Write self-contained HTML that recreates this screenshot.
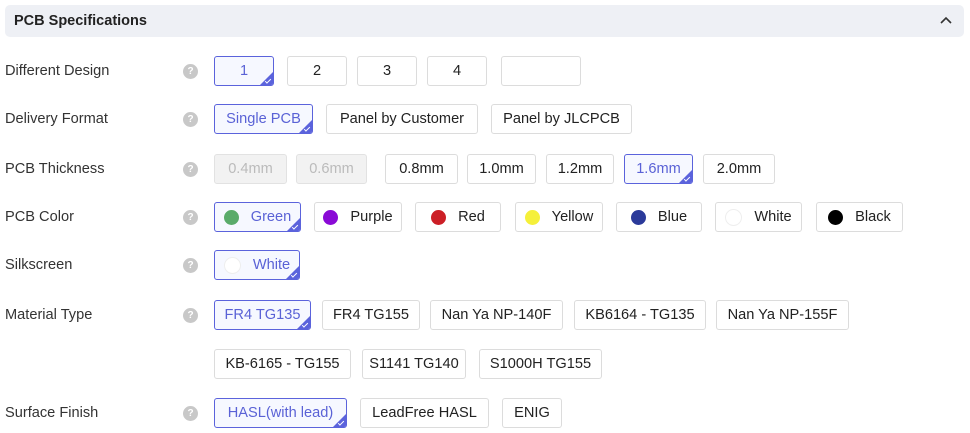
<!DOCTYPE html>
<html><head><meta charset="utf-8"><style>
body{margin:0;width:970px;height:433px;background:#fff;font-family:"Liberation Sans",sans-serif;position:relative;overflow:hidden}
.hd{position:absolute;left:5px;top:5px;width:959px;height:32px;background:#eef0f5;border-radius:5px}
.hd b{position:absolute;left:9px;top:8px;font-size:14.5px;color:#222}
.hd svg{position:absolute;right:12px;top:11px}
.lb{position:absolute;left:5px;font-size:14.6px;color:#333;line-height:16px}
.q{position:absolute;left:183px;width:15px;height:15px;border-radius:50%;background:#c8c8c8;color:#fff;font-size:10px;font-weight:bold;text-align:center;line-height:15px}
.b{position:absolute;box-sizing:border-box;border:1px solid #dcdcdc;border-radius:3px;background:#fff;font-size:14.6px;color:#222;display:flex;align-items:center;justify-content:center;overflow:hidden}
.s{border-color:#5b63dc;background:#f6f8ff;color:#5a62d6}
.s:after{content:"";position:absolute;right:0;bottom:0;border-style:solid;border-width:0 0 13px 13px;border-color:transparent transparent #5b63dc transparent}
.s:before{content:"";position:absolute;right:2px;bottom:3px;width:5px;height:2px;border-left:1px solid #fff;border-bottom:1px solid #fff;transform:rotate(-45deg);z-index:2}
.d{background:#f2f2f2;color:#bbb;border-color:#e2e2e2}
.c{display:inline-block;width:15px;height:15px;border-radius:50%;margin-right:12px}
</style></head><body>
<div class="hd"><b>PCB Specifications</b><svg width="12" height="8" viewBox="0 0 12 8"><path d="M1 7 L6 2 L11 7" stroke="#333" stroke-width="1.6" fill="none"/></svg></div>

<div class="lb" style="top:63px">Different Design</div><div class="q" style="top:64px">?</div>
<div class="b s" style="left:214px;top:56px;width:60px;height:30px">1</div>
<div class="b" style="left:287px;top:56px;width:60px;height:30px">2</div>
<div class="b" style="left:357px;top:56px;width:60px;height:30px">3</div>
<div class="b" style="left:427px;top:56px;width:60px;height:30px">4</div>
<div class="b" style="left:501px;top:56px;width:80px;height:30px"></div>

<div class="lb" style="top:111px">Delivery Format</div><div class="q" style="top:112px">?</div>
<div class="b s" style="left:214px;top:104px;width:99px;height:30px">Single PCB</div>
<div class="b" style="left:326px;top:104px;width:152px;height:30px">Panel by Customer</div>
<div class="b" style="left:491px;top:104px;width:141px;height:30px">Panel by JLCPCB</div>

<div class="lb" style="top:161px">PCB Thickness</div><div class="q" style="top:162px">?</div>
<div class="b d" style="left:214px;top:154px;width:73px;height:30px">0.4mm</div>
<div class="b d" style="left:296px;top:154px;width:71px;height:30px">0.6mm</div>
<div class="b" style="left:385px;top:154px;width:73px;height:30px">0.8mm</div>
<div class="b" style="left:467px;top:154px;width:69px;height:30px">1.0mm</div>
<div class="b" style="left:546px;top:154px;width:68px;height:30px">1.2mm</div>
<div class="b s" style="left:624px;top:154px;width:69px;height:30px">1.6mm</div>
<div class="b" style="left:703px;top:154px;width:72px;height:30px">2.0mm</div>

<div class="lb" style="top:209px">PCB Color</div><div class="q" style="top:210px">?</div>
<div class="b s" style="left:214px;top:202px;width:87px;height:30px"><span class="c" style="background:#5aab6a"></span>Green</div>
<div class="b" style="left:314px;top:202px;width:88px;height:30px"><span class="c" style="background:#8a0ad6"></span>Purple</div>
<div class="b" style="left:415px;top:202px;width:86px;height:30px"><span class="c" style="background:#cc1f26"></span>Red</div>
<div class="b" style="left:515px;top:202px;width:88px;height:30px"><span class="c" style="background:#f5f03a"></span>Yellow</div>
<div class="b" style="left:616px;top:202px;width:86px;height:30px"><span class="c" style="background:#2b3a9a"></span>Blue</div>
<div class="b" style="left:715px;top:202px;width:87px;height:30px"><span class="c" style="background:#fff;border:1px solid #eee"></span>White</div>
<div class="b" style="left:816px;top:202px;width:87px;height:30px"><span class="c" style="background:#000"></span>Black</div>

<div class="lb" style="top:257px">Silkscreen</div><div class="q" style="top:258px">?</div>
<div class="b s" style="left:214px;top:250px;width:86px;height:30px"><span class="c" style="background:#fff;border:1px solid #eee"></span>White</div>

<div class="lb" style="top:307px">Material Type</div><div class="q" style="top:308px">?</div>
<div class="b s" style="left:214px;top:300px;width:97px;height:30px">FR4 TG135</div>
<div class="b" style="left:322px;top:300px;width:98px;height:30px">FR4 TG155</div>
<div class="b" style="left:430px;top:300px;width:133px;height:30px">Nan Ya NP-140F</div>
<div class="b" style="left:574px;top:300px;width:132px;height:30px">KB6164 - TG135</div>
<div class="b" style="left:716px;top:300px;width:133px;height:30px">Nan Ya NP-155F</div>
<div class="b" style="left:214px;top:349px;width:137px;height:30px">KB-6165 - TG155</div>
<div class="b" style="left:362px;top:349px;width:104px;height:30px">S1141 TG140</div>
<div class="b" style="left:479px;top:349px;width:123px;height:30px">S1000H TG155</div>

<div class="lb" style="top:405px">Surface Finish</div><div class="q" style="top:406px">?</div>
<div class="b s" style="left:214px;top:398px;width:133px;height:30px">HASL(with lead)</div>
<div class="b" style="left:360px;top:398px;width:129px;height:30px">LeadFree HASL</div>
<div class="b" style="left:502px;top:398px;width:60px;height:30px">ENIG</div>
</body></html>
